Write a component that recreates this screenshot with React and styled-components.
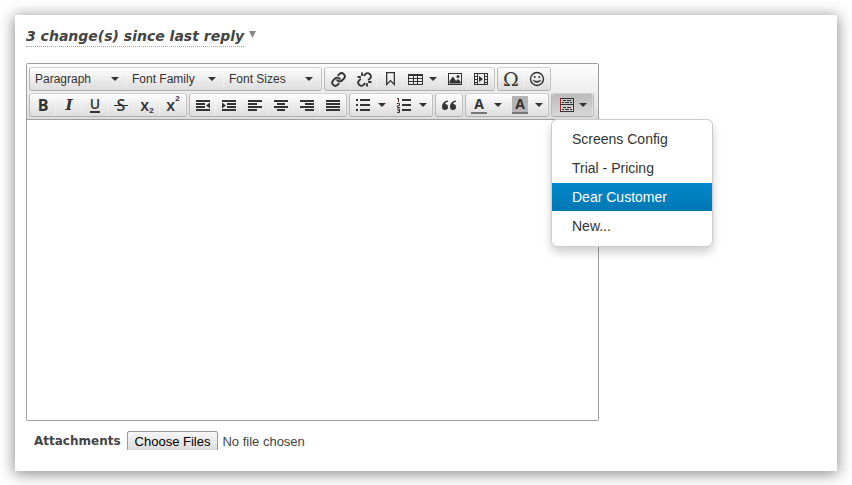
import React from "react";
import styled, { createGlobalStyle, css } from "styled-components";
import { Link, Unlink } from "lucide-react";

const GlobalStyle = createGlobalStyle`
  *, *::before, *::after { box-sizing: border-box; }
  body {
    margin: 0;
    background: #fff;
    color: #444;
    font-family: "Liberation Sans", Arial, sans-serif;
    font-size: 13px;
  }
  button, select, input, textarea { font: inherit; color: inherit; margin: 0; }
`;

const Card = styled.main`
  margin: 15px;
  padding: 11px 11px 21px;
  background: #fff;
  box-shadow: 0 2px 14px 1px rgba(0, 0, 0, 0.45);
`;

const ChangesToggle = styled.button`
  display: flex;
  align-items: flex-start;
  gap: 4px;
  padding: 0;
  border: 0;
  background: none;
  font: italic bold 14px/20px "DejaVu Sans", Verdana, sans-serif;
  cursor: pointer;
`;

const ChangesLabel = styled.span`
  border-bottom: 1px dotted #aaa;
`;

const ToggleArrow = styled.svg`
  width: 9px;
  height: 18px;
  fill: #888;
`;

const Editor = styled.section`
  max-width: 573px;
  margin-top: 16px;
  border: 1px solid #9e9e9e;
  border-radius: 2px;
`;

const Toolbar = styled.div`
  display: grid;
  gap: 2px;
  padding: 3px 2px 2px;
  background: linear-gradient(#fdfdfd, #ddd);
  border-bottom: 1px solid #9e9e9e;
`;

const ToolRow = styled.div`
  display: flex;
  flex-wrap: wrap;
  gap: 2px;
`;

const Group = styled.div`
  position: relative;
  display: flex;
  height: 24px;
  border: 1px solid;
  border-color: #d0d0d0 #c0c0c0 #b0b0b0 #b8b8b8;
  border-radius: 3px;
  background: linear-gradient(#fdfdfd, #ddd);
`;

const ToolButton = styled.button`
  display: flex;
  align-items: center;
  justify-content: center;
  gap: ${(p) => p.$gap || 0}px;
  width: ${(p) => p.$width || 26}px;
  padding: 0;
  border: 0;
  border-radius: 2px;
  background: none;
  box-shadow: inset -1px 0 rgba(255, 255, 255, 0.3);
  color: #333;
  cursor: pointer;
  ${(p) =>
    p.$active &&
    css`
      background: linear-gradient(#bbb, #d8d8d8);
    `}
`;

const SelectBox = styled.label`
  display: grid;
  align-items: center;
  width: 97px;
  box-shadow: inset -1px 0 rgba(255, 255, 255, 0.3);

  > * { grid-area: 1 / 1; }
  > svg { justify-self: end; margin-right: 8px; pointer-events: none; }
`;

const FormatSelect = styled.select`
  width: 100%;
  height: 100%;
  padding: 0 18px 0 5px;
  appearance: none;
  border: 0;
  background: none;
  color: #333;
  font-size: 12px;
`;

const CaretShape = styled.svg`
  width: 8px;
  height: 4px;
  fill: #333;
`;

const IconShape = styled.svg`
  width: 16px;
  height: 16px;
  fill: #333;
`;

const Glyph = styled.span`
  font-family: ${(p) => p.$family || '"Open Sans", sans-serif'};
  font-size: ${(p) => p.$size || 16}px;
  font-weight: ${(p) => p.$weight || 700};
  font-style: ${(p) => p.$style || "normal"};
  line-height: 16px;
`;

const UnderlinedGlyph = styled(Glyph)`
  height: 15px;
  line-height: 12px;
  border-bottom: 2px solid #333;
`;

const StruckGlyph = styled(Glyph)`
  padding: 0 3px;
  background: linear-gradient(#333, #333) center / 100% 1px no-repeat;
`;

const Script = styled.span`
  font: bold 8px/8px "Liberation Sans", sans-serif;
  align-self: ${(p) => (p.$low ? "flex-end" : "flex-start")};
  margin: 1px 0;
`;

const Swatch = styled.span`
  width: 16px;
  height: 18px;
  border-bottom: 2px solid #777;
  background: ${(p) => p.$fill || "none"};
  background-clip: padding-box;
  font: bold 14px/16px "Open Sans", sans-serif;
`;

const Body = styled.textarea`
  display: block;
  width: 100%;
  height: 300px;
  padding: 8px;
  border: 0;
  outline: 0;
  resize: none;
  background: #fff;
`;

const Menu = styled.ul`
  position: absolute;
  z-index: 1;
  top: 100%;
  left: -1px;
  display: grid;
  gap: 1px;
  width: 162px;
  margin: 3px 0 0;
  padding: 5px 0 6px;
  list-style: none;
  border: 1px solid #ccc;
  border-radius: 6px;
  background: #fff;
  box-shadow: 0 5px 10px rgba(0, 0, 0, 0.2);
`;

const MenuItem = styled.button`
  display: block;
  width: 100%;
  height: 28px;
  padding: 0 20px;
  border: 0;
  text-align: left;
  font-size: 14px;
  cursor: pointer;
  color: ${(p) => (p.$selected ? "#fff" : "#333")};
  background: ${(p) => (p.$selected ? "linear-gradient(#0088cc, #0077b3)" : "none")};
`;

const Attachments = styled.div`
  display: flex;
  align-items: flex-start;
  gap: 6px;
  height: 19px;
  margin: 10px 8px 0;
  overflow: hidden;
`;

const AttachLabel = styled.label`
  font: bold 12px/20px "DejaVu Sans", Verdana, sans-serif;
`;

const FileInput = styled.input`
  height: 20px;
  font-size: 13px;

  &::file-selector-button {
    height: 20px;
    margin: 0 4px 0 0;
    padding: 0 7px;
    border: 1px solid #999;
    border-radius: 2px;
    background: linear-gradient(#f6f6f6, #ddd);
    color: #000;
    font: inherit;
  }
`;

const Caret = () => (
  <CaretShape viewBox="0 0 8 4" aria-hidden="true">
    <path d="M0 0H8L4 4Z" />
  </CaretShape>
);

const Icon = ({ children }) => (
  <IconShape viewBox="0 0 16 16" aria-hidden="true">
    {children}
  </IconShape>
);

const lines = (rows) => (
  <Icon>
    <path shapeRendering="crispEdges" d={rows.map(([x, y, w]) => `M${x} ${y}h${w}v2h-${w}z`).join("")} />
  </Icon>
);

const icons = {
  outdent: (
    <Icon>
      <path shapeRendering="crispEdges" d="M1 3h14v2H1zM1 6h9v2H1zM1 9h9v2H1zM1 12h14v2H1z" />
      <path d="M15 5.5v6L11 8.5z" />
    </Icon>
  ),
  indent: (
    <Icon>
      <path shapeRendering="crispEdges" d="M1 3h14v2H1zM6 6h9v2H6zM6 9h9v2H6zM1 12h14v2H1z" />
      <path d="M1 5.5v6L5 8.5z" />
    </Icon>
  ),
  left: lines([[1, 3, 14], [1, 6, 9], [1, 9, 14], [1, 12, 9]]),
  center: lines([[1, 3, 14], [4, 6, 8], [1, 9, 14], [4, 12, 8]]),
  right: lines([[1, 3, 14], [6, 6, 9], [1, 9, 14], [6, 12, 9]]),
  justify: lines([[1, 3, 14], [1, 6, 14], [1, 9, 14], [1, 12, 14]]),
  bullets: lines([[1, 2, 2], [5, 2, 10], [1, 7, 2], [5, 7, 10], [1, 12, 2], [5, 12, 10]]),
  numbers: (
    <Icon>
      <path shapeRendering="crispEdges" d="M6 2h9v2H6zM6 7h9v2H6zM6 12h9v2H6z" />
      <path
        d="M1 1.5h1.5V5M1 6.5h2.500v2H1.500v2H4M1 12h2.500v3.500H1M1.500 13.700h2"
        fill="none"
        stroke="#4a2a2a"
      />
    </Icon>
  ),
  quote: (
    <Icon>
      <path d="M7 3.500C3 4 1 6.500 1 10a3 3 0 1 0 3-3C4.500 5.800 5.500 5 7 4.700zM15 3.500C11 4 9 6.500 9 10a3 3 0 1 0 3-3C12.500 5.800 13.500 5 15 4.700z" />
    </Icon>
  ),
  bookmark: (
    <Icon>
      <path d="M4 1h9v14l-4.500-4.500L4 15zM5.300 2.300v9.600l3.200-3.200 3.200 3.200V2.300z" fillRule="evenodd" />
    </Icon>
  ),
  table: (
    <Icon>
      <path
        shapeRendering="crispEdges"
        fillRule="evenodd"
        d="M0 3h15v11H0zM1 5v2h4V5zM6 5v2h3V5zM10 5v2h4V5zM1 8v2h4V8zM6 8v2h3V8zM10 8v2h4V8zM1 11v2h4v-2zM6 11v2h3v-2zM10 11v2h4v-2z"
      />
    </Icon>
  ),
  image: (
    <Icon>
      <path shapeRendering="crispEdges" fillRule="evenodd" d="M1 2h14v12H1zM2 3v10h12V3z" />
      <path d="M2.500 12.500V10L6 5.500l3 4.500 2-2 2.500 2.500v2z" />
      <circle cx="11" cy="5.500" r="1.500" />
    </Icon>
  ),
  media: (
    <Icon>
      <path
        shapeRendering="crispEdges"
        fillRule="evenodd"
        d="M1 2h14v12H1zM2 3v2h2V3zM2 6v2h2V6zM2 9v2h2V9zM2 12v1h2v-1zM12 3v2h2V3zM12 6v2h2V6zM12 9v2h2V9zM12 12v1h2v-1zM5 3v10h6V3z"
      />
      <path d="M6 5v6l4-3z" />
    </Icon>
  ),
  smile: (
    <Icon>
      <circle cx="8" cy="8" r="6.500" fill="none" stroke="#333" strokeWidth="1.400" />
      <circle cx="5.700" cy="6" r="1" />
      <circle cx="10.300" cy="6" r="1" />
      <path d="M4 9c1 3.300 7 3.300 8 0-2 1.500-6 1.500-8 0z" stroke="#333" strokeWidth=".5" />
    </Icon>
  ),
  template: (
    <Icon>
      <path
        shapeRendering="crispEdges"
        fillRule="evenodd"
        d="M1 1h14v14H1zM2 2v5h12V2zM2 8v6h12V8z"
      />
      <path
        shapeRendering="crispEdges"
        d="M4 3h3v1H4zM8 3h4v1H8zM3 5h2v1H3zM6 5h4v1H6zM11 5h2v1h-2zM4 10h3v1H4zM8 10h4v1H8zM3 12h2v1H3zM6 12h4v1H6zM11 12h2v1h-2z"
      />
      <path shapeRendering="crispEdges" fill="#8b2d2d" d="M1 1h1v6H1zM1 8h1v6H1z" />
    </Icon>
  ),
};

const Select = ({ label }) => (
  <SelectBox>
    <FormatSelect aria-label={label}>
      <option>{label}</option>
    </FormatSelect>
    <Caret />
  </SelectBox>
);

const Tool = ({ label, children, ...rest }) => (
  <ToolButton type="button" title={label} aria-label={label} {...rest}>
    {children}
  </ToolButton>
);

const replies = ["Screens Config", "Trial - Pricing", "Dear Customer", "New..."];

export default function App() {
  return (
    <>
      <GlobalStyle />
      <Card>
        <ChangesToggle type="button">
          <ChangesLabel>3 change(s) since last reply</ChangesLabel>
          <ToggleArrow viewBox="0 0 9 18" aria-hidden="true">
            <path d="M1 5h7L4.500 12z" />
          </ToggleArrow>
        </ChangesToggle>

        <Editor aria-label="Reply editor">
          <Toolbar role="toolbar">
            <ToolRow>
              <Group>
                <Select label="Paragraph" />
                <Select label="Font Family" />
                <Select label="Font Sizes" />
              </Group>
              <Group>
                <Tool label="Insert link"><Link size={15} strokeWidth={3} /></Tool>
                <Tool label="Remove link"><Unlink size={15} strokeWidth={3} /></Tool>
                <Tool label="Bookmark">{icons.bookmark}</Tool>
                <Tool label="Table" $width={39} $gap={5}>{icons.table}<Caret /></Tool>
                <Tool label="Image">{icons.image}</Tool>
                <Tool label="Video">{icons.media}</Tool>
              </Group>
              <Group>
                <Tool label="Special character"><Glyph $size={19} $family='"DejaVu Serif"' $weight={400}>Ω</Glyph></Tool>
                <Tool label="Emoticons">{icons.smile}</Tool>
              </Group>
            </ToolRow>
            <ToolRow>
              <Group>
                <Tool label="Bold"><Glyph>B</Glyph></Tool>
                <Tool label="Italic"><Glyph $family='"DejaVu Serif"' $size={15} $style="italic">I</Glyph></Tool>
                <Tool label="Underline"><UnderlinedGlyph $weight={600} $size={14}>U</UnderlinedGlyph></Tool>
                <Tool label="Strikethrough"><StruckGlyph $weight={600}>S</StruckGlyph></Tool>
                <Tool label="Subscript"><Glyph $weight={600}>x</Glyph><Script $low>2</Script></Tool>
                <Tool label="Superscript"><Glyph $weight={600}>x</Glyph><Script>2</Script></Tool>
              </Group>
              <Group>
                <Tool label="Decrease indent">{icons.outdent}</Tool>
                <Tool label="Increase indent">{icons.indent}</Tool>
                <Tool label="Align left">{icons.left}</Tool>
                <Tool label="Align center">{icons.center}</Tool>
                <Tool label="Align right">{icons.right}</Tool>
                <Tool label="Justify">{icons.justify}</Tool>
              </Group>
              <Group>
                <Tool label="Bullet list" $width={41} $gap={7}>{icons.bullets}<Caret /></Tool>
                <Tool label="Numbered list" $width={41} $gap={7}>{icons.numbers}<Caret /></Tool>
              </Group>
              <Group>
                <Tool label="Blockquote">{icons.quote}</Tool>
              </Group>
              <Group>
                <Tool label="Text color" $width={41} $gap={7}><Swatch>A</Swatch><Caret /></Tool>
                <Tool label="Background color" $width={41} $gap={7}><Swatch $fill="#b5b5b5">A</Swatch><Caret /></Tool>
              </Group>
              <Group>
                <Tool label="Canned replies" $width={41} $gap={4} $active aria-expanded="true">
                  {icons.template}
                  <Caret />
                </Tool>
                <Menu role="menu">
                  {replies.map((name) => (
                    <li key={name} role="none">
                      <MenuItem type="button" role="menuitem" $selected={name === "Dear Customer"}>
                        {name}
                      </MenuItem>
                    </li>
                  ))}
                </Menu>
              </Group>
            </ToolRow>
          </Toolbar>
          <Body aria-label="Reply text" />
        </Editor>

        <Attachments>
          <AttachLabel htmlFor="attachments">Attachments</AttachLabel>
          <FileInput id="attachments" type="file" multiple />
        </Attachments>
      </Card>
    </>
  );
}
